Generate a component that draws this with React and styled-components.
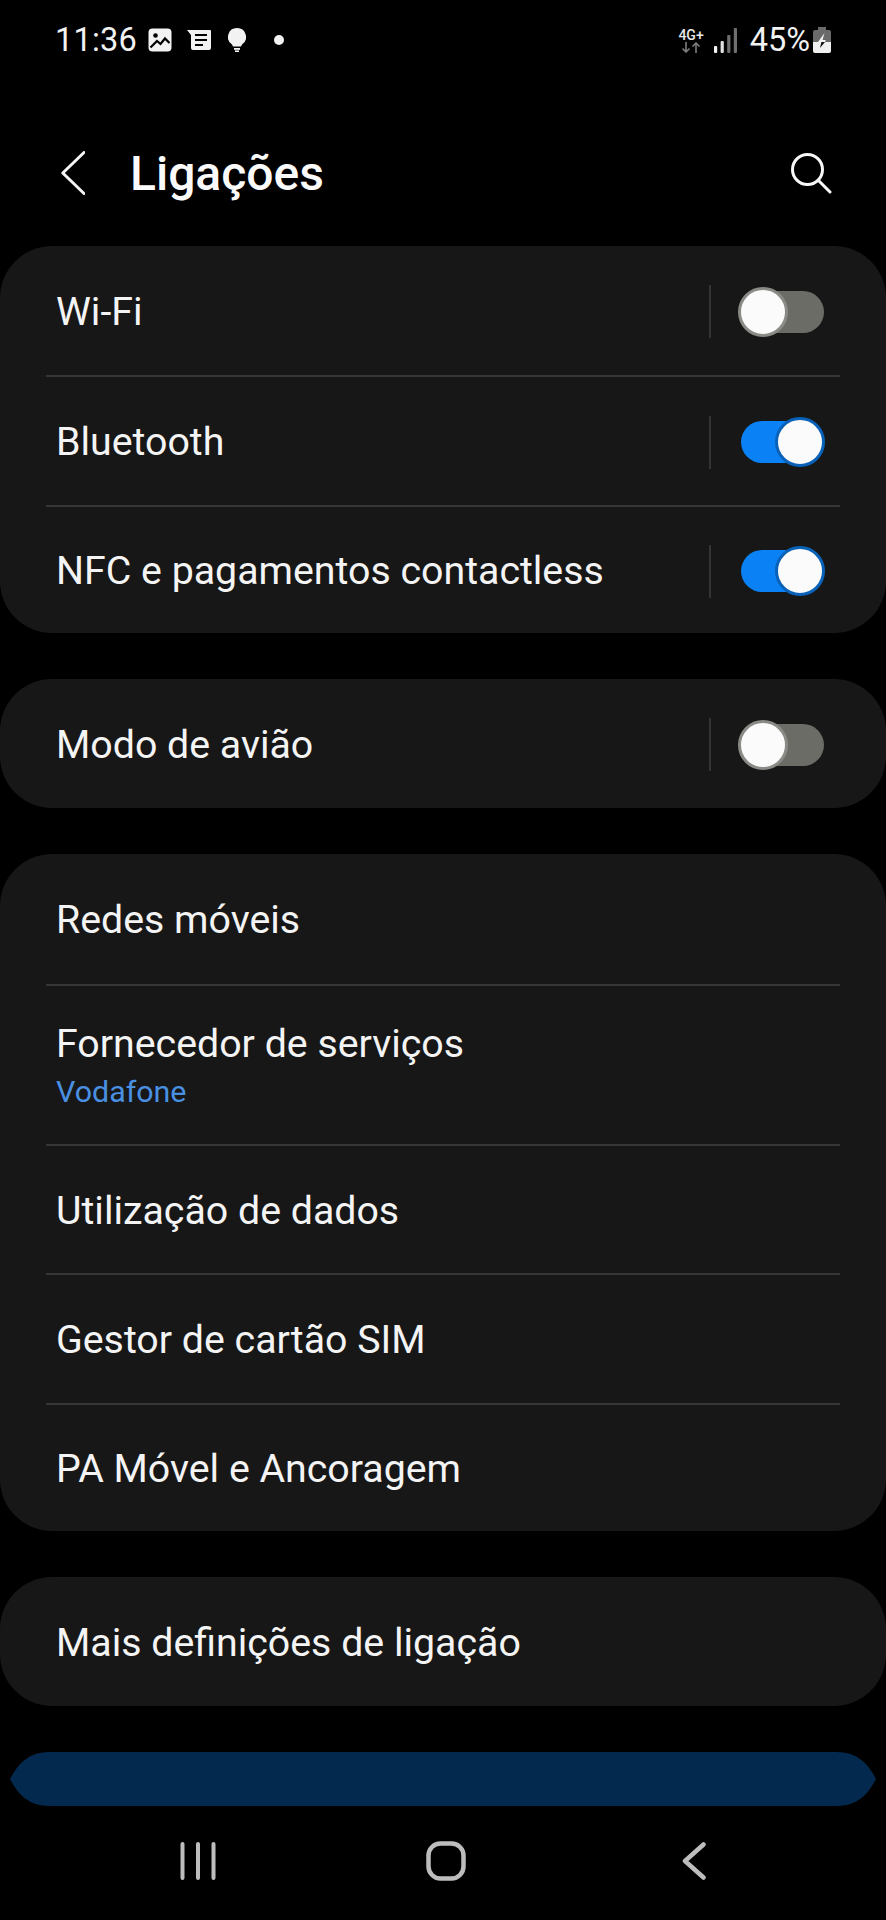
import React from "react";
import styled, { createGlobalStyle } from "styled-components";

const Global = createGlobalStyle`
  html, body { margin: 0; padding: 0; background: #000; }
  body { font-family: Roboto, "Liberation Sans", sans-serif; color: #f7f7f7; }
  * { box-sizing: border-box; }
`;

const Screen = styled.div`
  width: 886px;
  height: 1920px;
  background: #000;
  overflow: hidden;
  display: flex;
  flex-direction: column;
`;

const StatusBar = styled.div`
  height: 80px;
  padding: 0 55px;
  display: flex;
  align-items: center;
  justify-content: space-between;
`;

const StatusGroup = styled.div`
  display: flex;
  align-items: center;
`;

const Clock = styled.span`
  font-size: 32.5px;
  line-height: 36px;
  letter-spacing: 0.2px;
  margin-right: 11px;
  color: #f2f2f2;
`;

const StatusIcon = styled.svg`
  display: block;
  flex: none;
  margin-right: ${(p) => p.$gap || 0}px;
`;

const NetworkBadge = styled.div`
  display: flex;
  flex-direction: column;
  align-items: center;
  margin-right: 10px;
`;

const NetworkText = styled.span`
  font-size: 14px;
  line-height: 14px;
  font-weight: 500;
  color: #e8e8e8;
`;

const Percent = styled.span`
  font-size: 32.5px;
  line-height: 36px;
  margin: 0 3px 0 13px;
  color: #f2f2f2;
`;

const Header = styled.header`
  height: 166px;
  padding: 20px 54px 0 61px;
  display: flex;
  align-items: center;
`;

const Title = styled.h1`
  margin: 2px 0 0 45px;
  flex: 1;
  font-size: 48px;
  font-weight: 500;
  line-height: 56px;
  color: #fafafa;
`;

const List = styled.main`
  display: flex;
  flex-direction: column;
  gap: 46px;
`;

const Card = styled.section`
  background: #171717;
  border-radius: 52px;
  display: flex;
  flex-direction: column;
`;

const Row = styled.div`
  height: ${(p) => p.$h || 129}px;
  padding: 2px 62px 0 56px;
  display: flex;
  align-items: center;
  justify-content: space-between;
`;

const Texts = styled.div`
  display: flex;
  flex-direction: column;
`;

const Label = styled.span`
  font-size: 39.3px;
  line-height: 42px;
  color: #f4f4f4;
`;

const Sub = styled.span`
  font-size: 30.4px;
  line-height: 36px;
  margin-top: 9px;
  color: #4a90e2;
`;

const Divider = styled.hr`
  margin: 0 46px;
  border: 0;
  height: 2px;
  background: #363636;
  flex: none;
`;

const SwitchZone = styled.div`
  display: flex;
  align-items: center;
`;

const VLine = styled.span`
  display: block;
  width: 2px;
  height: 53px;
  background: #343434;
  margin-right: 30px;
`;

const Track = styled.div`
  width: 83px;
  height: 42px;
  border-radius: 21px;
  background: ${(p) => (p.$on ? "#0a82f5" : "#6c6c67")};
  display: flex;
  align-items: center;
  justify-content: ${(p) => (p.$on ? "flex-end" : "flex-start")};
`;

const Thumb = styled.span`
  display: block;
  flex: none;
  width: 50px;
  height: 50px;
  margin: 0 ${(p) => (p.$on ? "-1px" : "0")} 0 ${(p) => (p.$on ? "0" : "-3px")};
  border-radius: 50%;
  background: #fbfbfb;
  border: 3px solid ${(p) => (p.$on ? "#0a62b8" : "#8a8a86")};
`;

const ActionBar = styled.div`
  flex: none;
  width: 866px;
  height: 54px;
  margin: 46px 0 0 10px;
  background: #032a4e;
  clip-path: path("M0 27 C 8 12, 18 0, 40 0 H 826 C 848 0, 858 12, 866 27 C 858 42, 848 54, 826 54 H 40 C 18 54, 8 42, 0 27 Z");
`;

const NavBar = styled.nav`
  flex: 1;
  padding: 0 0 4px 180px;
  display: flex;
  align-items: center;
`;

const Switch = ({ on }) => (
  <SwitchZone>
    <VLine />
    <Track $on={on}>
      <Thumb $on={on} />
    </Track>
  </SwitchZone>
);

const ToggleRow = ({ label, on, h }) => (
  <Row $h={h}>
    <Label>{label}</Label>
    <Switch on={on} />
  </Row>
);

const LinkRow = ({ label, sub, h }) => (
  <Row $h={h}>
    <Texts>
      <Label>{label}</Label>
      {sub && <Sub>{sub}</Sub>}
    </Texts>
  </Row>
);

const ImageIcon = () => (
  <StatusIcon $gap={15} width="24" height="24" viewBox="0 0 24 24">
    <rect x="0.5" y="0.5" width="23" height="23" rx="4" fill="#f2f2f2" />
    <circle cx="7.5" cy="7.5" r="2.3" fill="#000" />
    <path d="M2.5 19.5 L9 13 L12.5 16 L17 10.5 L21.5 15" fill="none" stroke="#000" strokeWidth="2.2" />
  </StatusIcon>
);

const NewsIcon = () => (
  <StatusIcon $gap={17} width="24" height="22" viewBox="0 0 24 22">
    <path d="M0 1 H23 A1 1 0 0 1 24 2 V19 A2 2 0 0 1 22 21 H6 A2 2 0 0 1 4 19 V6 Z" fill="#f2f2f2" />
    <path d="M8 6 H20 M8 11 H20 M8 16 H16" stroke="#000" strokeWidth="2.2" />
  </StatusIcon>
);

const BulbIcon = () => (
  <StatusIcon $gap={28} width="18" height="24" viewBox="0 0 18 24">
    <path d="M9 0 A9 9 0 0 1 14 16.5 L13 18.5 H5 L4 16.5 A9 9 0 0 1 9 0 Z" fill="#f2f2f2" />
    <rect x="6" y="20" width="6" height="1.8" fill="#f2f2f2" />
    <rect x="7" y="22.4" width="4" height="1.6" fill="#f2f2f2" />
  </StatusIcon>
);

const DotIcon = () => (
  <StatusIcon width="10" height="10" viewBox="0 0 10 10">
    <circle cx="5" cy="5" r="5" fill="#f2f2f2" />
  </StatusIcon>
);

const ArrowsIcon = () => (
  <StatusIcon width="20" height="11" viewBox="0 0 20 11">
    <path d="M5 0 V10 M1.5 6.5 L5 10 L8.5 6.5 M15 11 V1 M11.5 4.5 L15 1 L18.5 4.5" fill="none" stroke="#7d7d7d" strokeWidth="1.6" />
  </StatusIcon>
);

const SignalIcon = () => (
  <StatusIcon width="23" height="25" viewBox="0 0 23 25">
    <rect x="0" y="18" width="3.2" height="7" rx="1" fill="#f2f2f2" />
    <rect x="6.6" y="13" width="3.2" height="12" rx="1" fill="#e0e0e0" />
    <rect x="13.2" y="7" width="3.2" height="18" rx="1" fill="#6e6e6e" />
    <rect x="19.8" y="0" width="3.2" height="25" rx="1" fill="#6e6e6e" />
  </StatusIcon>
);

const BatteryIcon = () => (
  <StatusIcon width="18" height="26" viewBox="0 0 18 26">
    <path d="M5 0 H13 V3 H16 A2 2 0 0 1 18 5 V15 H0 V5 A2 2 0 0 1 2 3 H5 Z" fill="#6a6a6a" />
    <path d="M0 15 H18 V24 A2 2 0 0 1 16 26 H2 A2 2 0 0 1 0 24 Z" fill="#f0f0f0" />
    <path d="M11.5 6 L5 15 H12 L12.8 13 H9.5 Z" fill="#f4f4f4" />
    <path d="M5.8 15 H12 L7 21 L8.4 15 Z" fill="#111" />
  </StatusIcon>
);

const BackIcon = () => (
  <StatusIcon width="24" height="44" viewBox="0 0 24 44">
    <path d="M23 1.5 L1.8 22 L23 42.5" fill="none" stroke="#f5f5f5" strokeWidth="3" strokeLinecap="round" strokeLinejoin="round" />
  </StatusIcon>
);

const SearchIcon = () => (
  <StatusIcon width="42" height="42" viewBox="0 0 42 42">
    <circle cx="17.5" cy="17.5" r="15" fill="none" stroke="#f8f8f8" strokeWidth="3" />
    <path d="M28.5 28.5 L40 40" fill="none" stroke="#f8f8f8" strokeWidth="3" strokeLinecap="round" />
  </StatusIcon>
);

const RecentIcon = () => (
  <StatusIcon $gap={210} width="36" height="38" viewBox="0 0 36 38">
    <path d="M2.5 2 V36 M18 2 V36 M33.5 2 V36" fill="none" stroke="#bdbdbd" strokeWidth="4" strokeLinecap="round" />
  </StatusIcon>
);

const HomeIcon = () => (
  <StatusIcon $gap={216} width="40" height="40" viewBox="0 0 40 40">
    <rect x="2.5" y="2.5" width="35" height="35" rx="12" fill="none" stroke="#bdbdbd" strokeWidth="4.5" />
  </StatusIcon>
);

const NavBackIcon = () => (
  <StatusIcon width="24" height="38" viewBox="0 0 24 38">
    <path d="M21.5 2.5 L3 19 L21.5 35.5" fill="none" stroke="#bdbdbd" strokeWidth="4.5" strokeLinecap="round" strokeLinejoin="round" />
  </StatusIcon>
);

export default function App() {
  return (
    <>
      <Global />
      <Screen>
        <StatusBar>
          <StatusGroup>
            <Clock>11:36</Clock>
            <ImageIcon />
            <NewsIcon />
            <BulbIcon />
            <DotIcon />
          </StatusGroup>
          <StatusGroup>
            <NetworkBadge>
              <NetworkText>4G+</NetworkText>
              <ArrowsIcon />
            </NetworkBadge>
            <SignalIcon />
            <Percent>45%</Percent>
            <BatteryIcon />
          </StatusGroup>
        </StatusBar>
        <Header>
          <BackIcon />
          <Title>Ligações</Title>
          <SearchIcon />
        </Header>
        <List>
          <Card>
            <ToggleRow label="Wi-Fi" on={false} h={129} />
            <Divider />
            <ToggleRow label="Bluetooth" on h={128} />
            <Divider />
            <ToggleRow label="NFC e pagamentos contactless" on h={126} />
          </Card>
          <Card>
            <ToggleRow label="Modo de avião" on={false} />
          </Card>
          <Card>
            <LinkRow label="Redes móveis" h={130} />
            <Divider />
            <LinkRow label="Fornecedor de serviços" sub="Vodafone" h={158} />
            <Divider />
            <LinkRow label="Utilização de dados" h={127} />
            <Divider />
            <LinkRow label="Gestor de cartão SIM" h={128} />
            <Divider />
            <LinkRow label="PA Móvel e Ancoragem" h={126} />
          </Card>
          <Card>
            <LinkRow label="Mais definições de ligação" />
          </Card>
        </List>
        <ActionBar />
        <NavBar>
          <RecentIcon />
          <HomeIcon />
          <NavBackIcon />
        </NavBar>
      </Screen>
    </>
  );
}
